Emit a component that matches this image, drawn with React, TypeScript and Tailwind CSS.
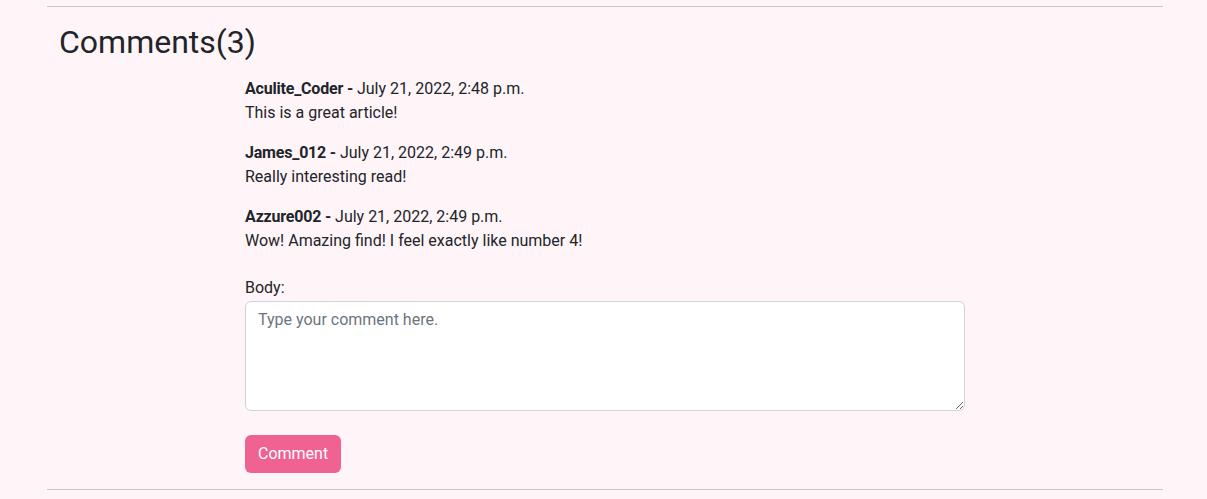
const comments = [
    { name: 'Aculite_Coder', date: 'July 21, 2022, 2:48 p.m.', body: 'This is a great article!' },
    { name: 'James_012', date: 'July 21, 2022, 2:49 p.m.', body: 'Really interesting read!' },
    { name: 'Azzure002', date: 'July 21, 2022, 2:49 p.m.', body: 'Wow! Amazing find! I feel exactly like number 4!' },
];

export default function App() {
    return (
        <div
            className="min-h-[499px] bg-[#fff4f8] pt-[6px] text-[#212529]"
            style={{ fontFamily: 'Roboto, "Liberation Sans", sans-serif' }}
        >
            <div className="w-[1116px] ml-[47px]">
                <div className="border-t border-[#c8c8c8]" />
                <h2 className="mt-[16px] pl-3 text-[32px] leading-[38px]">Comments(3)</h2>

                <div className="ml-[198px] mt-[16px]">
                    {comments.map((c) => (
                        <div key={c.name} className="mb-4 text-base leading-6">
                            <p>
                                <strong className="font-bold tracking-[-0.2px]">{c.name} -</strong> {c.date}
                            </p>
                            <p>{c.body}</p>
                        </div>
                    ))}

                    <form className="mt-[23px]">
                        <label className="block text-base leading-6">Body:</label>
                        <textarea
                            rows={4}
                            placeholder="Type your comment here."
                            className="block w-[720px] h-[110px] mt-px bg-white border border-[#ced4da] rounded-md px-3 py-1.5 text-base leading-6 placeholder:text-[#6c757d] outline-none"
                        />
                        <button
                            type="button"
                            className="mt-6 bg-[#f06292] text-white rounded-md px-[13px] h-[38px] text-base"
                        >
                            Comment
                        </button>
                    </form>
                </div>

                <div className="mt-[16px] border-t border-[#c8c8c8]" />
            </div>
        </div>
    );
}
